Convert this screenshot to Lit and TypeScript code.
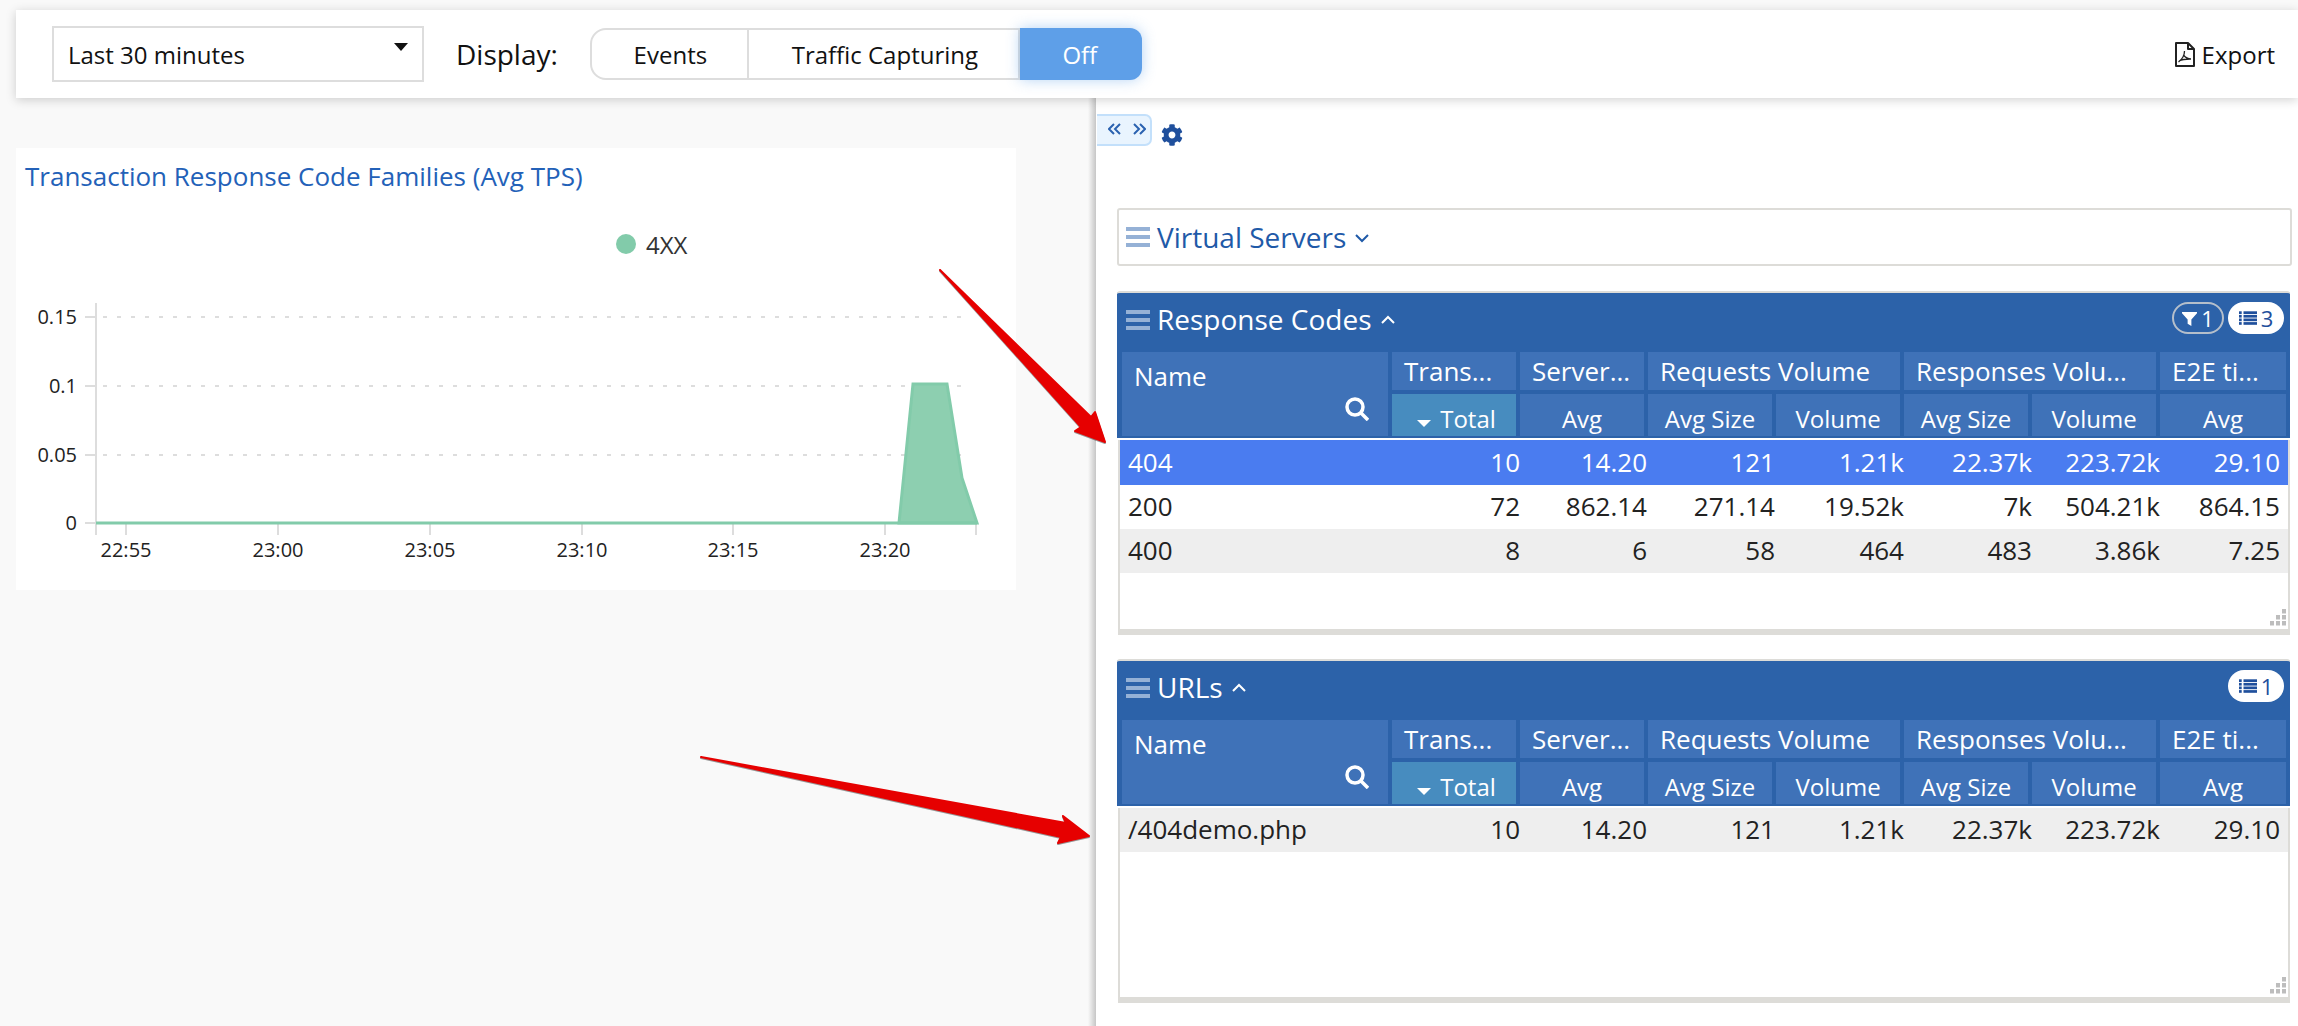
import { LitElement, html, css, svg } from 'lit';
import { customElement } from 'lit/decorators.js';

const rows1 = [
  ['404', '10', '14.20', '121', '1.21k', '22.37k', '223.72k', '29.10'],
  ['200', '72', '862.14', '271.14', '19.52k', '7k', '504.21k', '864.15'],
  ['400', '8', '6', '58', '464', '483', '3.86k', '7.25'],
];
const rows2 = [['/404demo.php', '10', '14.20', '121', '1.21k', '22.37k', '223.72k', '29.10']];

const gear =
  'M487.4 315.7l-42.6-24.6c4.3-23.2 4.3-47 0-70.2l42.6-24.6c4.9-2.8 7.1-8.6 5.5-14-11.1-35.6-30-67.8-54.7-94.6-3.8-4.1-10-5.1-14.8-2.3L380.8 110c-17.9-15.4-38.5-27.3-60.8-35.1V25.8c0-5.6-3.9-10.5-9.4-11.7-36.7-8.2-74.3-7.8-109.2 0-5.5 1.2-9.4 6.1-9.4 11.7V75c-22.2 7.9-42.8 19.8-60.8 35.1L88.7 85.5c-4.9-2.8-11-1.9-14.8 2.3-24.7 26.7-43.6 58.9-54.7 94.6-1.7 5.4.6 11.2 5.5 14L67.3 221c-4.3 23.2-4.3 47 0 70.2l-42.6 24.6c-4.9 2.8-7.1 8.6-5.5 14 11.1 35.6 30 67.8 54.7 94.6 3.8 4.1 10 5.1 14.8 2.3l42.6-24.6c17.9 15.4 38.5 27.3 60.8 35.1v49.2c0 5.6 3.9 10.5 9.4 11.7 36.7 8.2 74.3 7.8 109.2 0 5.5-1.2 9.4-6.1 9.4-11.7v-49.2c22.2-7.9 42.8-19.8 60.8-35.1l42.6 24.6c4.9 2.8 11 1.9 14.8-2.3 24.7-26.7 43.6-58.9 54.7-94.6 1.5-5.5-.7-11.3-5.6-14.1zM256 336c-44.1 0-80-35.9-80-80s35.9-80 80-80 80 35.9 80 80-35.9 80-80 80z';

const burger = html`<svg class="burger" viewBox="0 0 24 20">
  <rect width="24" height="4" y="0"></rect><rect width="24" height="4" y="8"></rect><rect width="24" height="4" y="16"></rect>
</svg>`;

const listIcon = html`<svg class="badge-icon" viewBox="0 0 20 16" fill="#1f4f9c">
  ${[0, 4, 8, 12].map(
    (y) => svg`<rect x="0" y=${y} width="3" height="3"></rect><rect x="5" y=${y} width="15" height="3"></rect>`
  )}
</svg>`;

const filterIcon = html`<svg class="badge-icon" viewBox="0 0 16 16" fill="#fff">
  <path d="M0 1h16v1.5L10 9v7L6 13.5V9L0 2.5z"></path>
</svg>`;

@customElement('app-root')
export class AppRoot extends LitElement {
  static styles = css`
    :host {
      display: block;
      font-family: 'Open Sans', 'Noto Sans', sans-serif;
      color: #222;
    }
    .page {
      position: relative;
      width: 2298px;
      height: 1026px;
      overflow: hidden;
      background: #f9f9f9;
      padding-top: 10px;
      box-sizing: border-box;
    }
    .topbar {
      position: relative;
      z-index: 2;
      margin-left: 16px;
      height: 88px;
      background: #fff;
      box-shadow: 0 2px 10px rgba(0, 0, 0, 0.18);
      display: flex;
      align-items: center;
      padding-left: 36px;
      padding-right: 23px;
      box-sizing: border-box;
    }
    .select {
      width: 372px;
      height: 56px;
      box-sizing: border-box;
      border: 2px solid #ddd;
      display: flex;
      align-items: center;
      padding-left: 14px;
      position: relative;
      font-size: 24px;
      color: #111;
    }
    .caret {
      position: absolute;
      right: 14px;
      top: 15px;
      width: 0;
      height: 0;
      border-left: 7px solid transparent;
      border-right: 7px solid transparent;
      border-top: 8px solid #111;
    }
    .display {
      font-size: 28px;
      margin-left: 32px;
      margin-right: 32px;
      color: #111;
    }
    .segs {
      display: flex;
      height: 52px;
      font-size: 24px;
      color: #111;
    }
    .seg {
      display: flex;
      align-items: center;
      justify-content: center;
      box-sizing: border-box;
      border: 2px solid #ddd;
      border-left: none;
    }
    .seg.events {
      width: 159px;
      border-left: 2px solid #ddd;
      border-radius: 16px 0 0 16px;
      padding-left: 2px;
    }
    .seg.traffic {
      width: 271px;
      padding-left: 3px;
    }
    .seg.off {
      width: 122px;
      border: none;
      background: #5e9fe8;
      color: #fff;
      border-radius: 0 12px 12px 0;
      box-shadow: 0 0 14px rgba(94, 159, 232, 0.45);
      padding-right: 2px;
    }
    .export {
      margin-left: auto;
      display: flex;
      align-items: center;
      gap: 7px;
      font-size: 24px;
      color: #111;
    }
    .export svg {
      width: 21px;
      height: 25px;
    }
    .main {
      display: flex;
      height: 928px;
    }
    .left {
      width: 1088px;
      padding: 50px 0 0 16px;
      box-sizing: border-box;
    }
    .split {
      width: 8px;
      background: linear-gradient(to right, #f9f9f9, #c6c6c6);
    }
    .card {
      width: 1000px;
      height: 442px;
      background: #fff;
    }
    .card svg {
      display: block;
    }
    .card text {
      font-family: 'Open Sans', 'Noto Sans', sans-serif;
      font-size: 20px;
      fill: #222;
    }
    .card text.title {
      font-size: 26px;
      fill: #2361b8;
    }
    .card text.legend {
      font-size: 24px;
      fill: #333;
    }
    .right {
      flex: 1;
      background: #fff;
      padding: 16px 6px 0 21px;
      box-sizing: border-box;
    }
    .tools {
      display: flex;
      align-items: flex-start;
      height: 94px;
      margin-left: -20px;
    }
    .collapse {
      width: 55px;
      height: 32px;
      box-sizing: border-box;
      background: #e9f4fe;
      border: 2px solid #c3e0fb;
      border-left: none;
      border-radius: 0 7px 7px 0;
      display: flex;
      align-items: center;
      padding-left: 11px;
    }
    .collapse svg {
      width: 38px;
      height: 12px;
      fill: none;
      stroke: #2b62b0;
      stroke-width: 2;
      margin-top: -2px;
    }
    .gear {
      width: 22px;
      height: 22px;
      margin: 10px 0 0 9px;
      fill: #1f4f9c;
    }
    .vs {
      height: 58px;
      box-sizing: border-box;
      border: 2px solid #dddcd8;
      border-radius: 3px;
      display: flex;
      align-items: center;
      gap: 7px;
      padding-left: 7px;
      font-size: 28px;
      color: #1f5aa8;
      margin-bottom: 25px;
    }
    .burger {
      width: 24px;
      height: 20px;
      fill: #95b1d6;
      flex: none;
    }
    .chev {
      width: 14px;
      height: 9px;
      fill: none;
      stroke: currentColor;
      stroke-width: 2;
      margin-left: 2px;
      margin-top: 3px;
    }
    .panel {
      height: 344px;
      margin-right: 2px;
      margin-bottom: 24px;
      display: flex;
      flex-direction: column;
    }
    .head {
      background: #2c62a9;
      border-top: 2px solid #dddcd8;
      border-radius: 3px 3px 0 0;
      padding: 0 4px 2px 5px;
      color: #fff;
    }
    .head-title {
      height: 59px;
      display: flex;
      align-items: flex-start;
      gap: 7px;
      margin-left: 4px;
      font-size: 28px;
      line-height: 36px;
      padding-top: 8px;
      box-sizing: border-box;
    }
    .head-title .burger {
      margin-top: 9px;
    }
    .head-title .chev {
      margin-top: 14px;
    }
    .badges {
      margin-left: auto;
      display: flex;
      gap: 4px;
      margin-top: 1px;
      margin-right: 2px;
      font-size: 22px;
    }
    .badge {
      height: 32px;
      box-sizing: border-box;
      border-radius: 16px;
      display: flex;
      align-items: center;
      justify-content: center;
      gap: 4px;
      line-height: 1;
    }
    .badge.outline {
      width: 52px;
      border: 2px solid #b5bfcb;
      color: #fff;
    }
    .badge.solid {
      width: 56px;
      background: #fff;
      color: #1f4f9c;
    }
    .badge-icon {
      width: 18px;
      height: 15px;
    }
    .badge.outline .badge-icon {
      width: 15px;
    }
    .cols {
      display: grid;
      grid-template-columns: 266px repeat(6, 124px) 126px;
      grid-template-rows: 38px 42px;
      gap: 4px;
      font-size: 26px;
    }
    .cell {
      background: #3f72b8;
      display: flex;
      align-items: center;
      box-sizing: border-box;
      padding-left: 12px;
      white-space: nowrap;
      overflow: hidden;
    }
    .cell.name {
      grid-row: span 2;
      display: block;
      position: relative;
      padding-top: 6px;
      line-height: 36px;
    }
    .search {
      position: absolute;
      right: 19px;
      bottom: 15px;
      width: 24px;
      height: 24px;
      fill: none;
      stroke: #fff;
      stroke-width: 3.5;
    }
    .wide {
      grid-column: span 2;
    }
    .sub {
      font-size: 24px;
      justify-content: center;
      padding: 6px 0 0 0;
    }
    .sub.active {
      background: #478cbf;
      gap: 9px;
      padding-left: 5px;
    }
    .sort {
      width: 0;
      height: 0;
      border-left: 7px solid transparent;
      border-right: 7px solid transparent;
      border-top: 7px solid #fff;
      margin-top: 10px;
    }
    .body {
      flex: 1;
      margin: 2px 0 0 1px;
      border-left: 2px solid #dddcd8;
      border-right: 2px solid #dddcd8;
      border-bottom: 6px solid #dddcd8;
      position: relative;
    }
    .row {
      display: grid;
      grid-template-columns: 272px 128px 127px 128px 129px 128px 128px 120px;
      height: 44px;
      align-items: center;
      font-size: 26px;
      padding-bottom: 2px;
      box-sizing: border-box;
      color: #222;
    }
    .row div {
      text-align: right;
      white-space: nowrap;
    }
    .row div:first-child {
      text-align: left;
      padding-left: 8px;
    }
    .row.sel {
      background: #4a7cf0;
      color: #fff;
      height: 45px;
    }
    .row.alt {
      background: #eee;
    }
    .grip {
      position: absolute;
      right: 2px;
      bottom: 3px;
      width: 16px;
      height: 17px;
      fill: #bdbdbd;
    }
    .arrows {
      position: absolute;
      left: 0;
      top: 0;
      z-index: 3;
      pointer-events: none;
      filter: drop-shadow(0.5px 1px 0.5px rgba(0, 0, 0, 0.4));
    }
  `;

  private chev(up: boolean) {
    return html`<svg class="chev" viewBox="0 0 14 9">
      <polyline points=${up ? '1,8 7,2 13,8' : '1,1 7,7 13,1'}></polyline>
    </svg>`;
  }

  private chart() {
    const grid = [
      [317, '0.15'],
      [386, '0.1'],
      [455, '0.05'],
      [523, '0'],
    ] as const;
    const ticks = [
      [126, '22:55'],
      [278, '23:00'],
      [430, '23:05'],
      [582, '23:10'],
      [733, '23:15'],
      [885, '23:20'],
    ] as const;
    return html`<svg width="1000" height="442" viewBox="16 148 1000 442">
      <text class="title" x="25" y="186">Transaction Response Code Families (Avg TPS)</text>
      <circle cx="626" cy="244" r="10" fill="#82cbaa"></circle>
      <text class="legend" x="646" y="254">4XX</text>
      ${grid.map(
        ([y, label]) => svg`
          ${y !== 523
            ? svg`<line x1="103" x2="968" y1=${y} y2=${y} stroke="#ddd" stroke-width="2" stroke-dasharray="4 10"></line>`
            : ''}
          <line x1="85" x2="96" y1=${y} y2=${y} stroke="#ddd" stroke-width="2"></line>
          <text x="77" y=${y + 7} text-anchor="end">${label}</text>`
      )}
      <line x1="96" x2="96" y1="303" y2="535" stroke="#ddd" stroke-width="2"></line>
      ${ticks.map(
        ([x, label]) => svg`
          <line x1=${x} x2=${x} y1="523" y2="535" stroke="#ddd" stroke-width="2"></line>
          <text x=${x} y="557" text-anchor="middle">${label}</text>`
      )}
      <line x1="976" x2="976" y1="523" y2="535" stroke="#ddd" stroke-width="2"></line>
      <polygon points="899,523 913,384 947,384 962,478 977,523" fill="#8dcfb0" stroke="#82cbaa" stroke-width="3"></polygon>
      <line x1="96" x2="977" y1="523" y2="523" stroke="#82cbaa" stroke-width="3"></line>
    </svg>`;
  }

  private panel(title: string, rows: string[][], badges: unknown) {
    return html`<section class="panel">
      <div class="head">
        <div class="head-title">
          ${burger}<span>${title}</span>${this.chev(true)}
          <div class="badges">${badges}</div>
        </div>
        <div class="cols">
          <div class="cell name">
            Name
            <svg class="search" viewBox="0 0 24 24"><circle cx="10" cy="10" r="8"></circle><line x1="16" y1="16" x2="23" y2="23"></line></svg>
          </div>
          <div class="cell">Trans...</div>
          <div class="cell">Server...</div>
          <div class="cell wide">Requests Volume</div>
          <div class="cell wide">Responses Volu...</div>
          <div class="cell">E2E ti...</div>
          <div class="cell sub active"><span class="sort"></span>Total</div>
          <div class="cell sub">Avg</div>
          <div class="cell sub">Avg Size</div>
          <div class="cell sub">Volume</div>
          <div class="cell sub">Avg Size</div>
          <div class="cell sub">Volume</div>
          <div class="cell sub">Avg</div>
        </div>
      </div>
      <div class="body">
        ${rows.map((r) => {
          const cls = r[0] === '404' ? 'sel' : r[0] === '200' ? '' : 'alt';
          return html`<div class="row ${cls}">${r.map((v) => html`<div>${v}</div>`)}</div>`;
        })}
        <svg class="grip" viewBox="0 0 16 17">
          <rect x="12" y="0" width="4" height="4.5"></rect>
          <rect x="6" y="6" width="4" height="4.5"></rect>
          <rect x="12" y="6" width="4" height="4.5"></rect>
          <rect x="0" y="12" width="4" height="4.5"></rect>
          <rect x="6" y="12" width="4" height="4.5"></rect>
          <rect x="12" y="12" width="4" height="4.5"></rect>
        </svg>
      </div>
    </section>`;
  }

  render() {
    return html`<div class="page">
      <header class="topbar">
        <div class="select">Last 30 minutes<span class="caret"></span></div>
        <div class="display">Display:</div>
        <div class="segs">
          <div class="seg events">Events</div>
          <div class="seg traffic">Traffic Capturing</div>
          <div class="seg off">Off</div>
        </div>
        <div class="export">
          <svg viewBox="0 0 21 25" fill="none" stroke="#222" stroke-width="2" stroke-linejoin="round">
            <path d="M2 1h12l6 6v17H2z"></path>
            <path d="M14 1v6h6"></path>
            <path d="M10.5 9c0 4-2 8-6 11M9.5 13c1.5 2 3.5 4 7.5 4M5 19c3-1.5 7-2 11-2" stroke-width="1.3"></path>
          </svg>
          Export
        </div>
      </header>
      <div class="main">
        <div class="left"><div class="card">${this.chart()}</div></div>
        <div class="split"></div>
        <div class="right">
          <div class="tools">
            <div class="collapse">
              <svg viewBox="0 0 38 12">
                <polyline points="6,1 1,6 6,11"></polyline>
                <polyline points="12,1 7,6 12,11"></polyline>
                <polyline points="26,1 31,6 26,11"></polyline>
                <polyline points="32,1 37,6 32,11"></polyline>
              </svg>
            </div>
            <svg class="gear" viewBox="0 0 512 512"><path d=${gear}></path></svg>
          </div>
          <div class="vs">${burger}<span>Virtual Servers</span>${this.chev(false)}</div>
          ${this.panel(
            'Response Codes',
            rows1,
            html`<div class="badge outline">${filterIcon}1</div><div class="badge solid">${listIcon}3</div>`
          )}
          ${this.panel('URLs', rows2, html`<div class="badge solid">${listIcon}1</div>`)}
        </div>
      </div>
      <svg class="arrows" width="2298" height="1026" viewBox="0 0 2298 1026">
        <polygon
          points="940,270 1091,417 1095,412 1105,442 1075,431 1081,427"
          fill="#e60000"
          stroke="#e60000"
          stroke-width="2"
          stroke-linejoin="round"
        ></polygon>
        <polygon
          points="701,757 1066,823 1063,816 1089,836 1058,843 1061,837"
          fill="#e60000"
          stroke="#e60000"
          stroke-width="2"
          stroke-linejoin="round"
        ></polygon>
      </svg>
    </div>`;
  }
}

declare global {
  interface HTMLElementTagNameMap {
    'app-root': AppRoot;
  }
}
